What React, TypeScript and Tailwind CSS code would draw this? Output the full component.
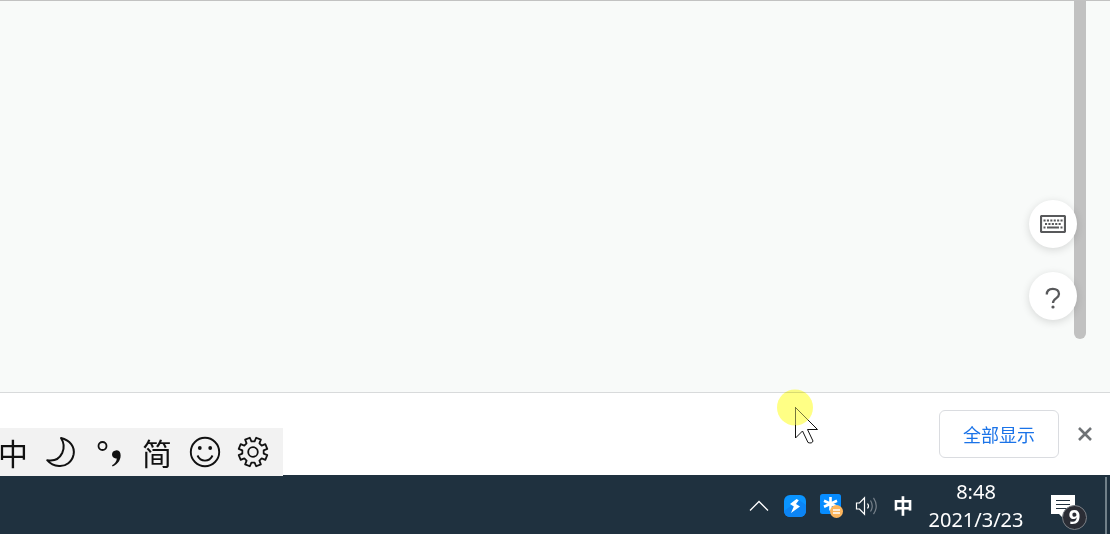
import React from "react";

const point = (radius: number, degrees: number) => {
  const a = ((degrees - 90) * Math.PI) / 180;
  return `${(15 + radius * Math.cos(a)).toFixed(2)} ${(15 + radius * Math.sin(a)).toFixed(2)}`;
};

const gearPath =
  "M" +
  Array.from({ length: 8 }, (_, i) => {
    const c = i * 45 + 22.5;
    return [point(10.8, c - 14), point(14.6, c - 10), point(14.6, c + 10), point(10.8, c + 14)].join("L");
  }).join("L") +
  "Z";

function MoonIcon() {
  return (
    <svg className="size-8" viewBox="0 0 32 32" fill="none" stroke="#111" strokeWidth="2" strokeLinejoin="round">
      <path d="M16 2C25 4 30 11 28.6 18.5C27 26 21 30.5 14 30C8.5 29.8 4.5 27 2.2 24.2C9 25.5 14.5 22.5 17.2 17C19.5 12 19 6.5 16 2Z" />
    </svg>
  );
}

function PunctuationIcon() {
  return (
    <svg className="size-8" viewBox="0 0 32 32" fill="none">
      <circle cx="9.500" cy="10" r="4" stroke="#111" strokeWidth="1.8" />
      <path d="M19 18.600a4.300 4.300 0 0 1 8.400-1.200c1.200 5.200-2.200 10.800-7.800 13l-.6-1.200c3-1.700 4.700-4.200 4.800-6.800c-2.600.5-4.800-1.200-4.800-3.800Z" fill="#111" />
    </svg>
  );
}

function SmileIcon() {
  return (
    <svg className="size-8" viewBox="0 0 32 32" fill="none" stroke="#111" strokeWidth="1.900">
      <circle cx="16" cy="16" r="14.200" />
      <path d="M8.500 19.500C11.500 26.300 20.500 26.300 23.500 19.500" />
      <circle cx="10.800" cy="12" r="1.900" fill="#111" stroke="none" />
      <circle cx="21.200" cy="12" r="1.900" fill="#111" stroke="none" />
    </svg>
  );
}

function GearIcon() {
  return (
    <svg className="size-8" viewBox="-1 -1 32 32" fill="none" stroke="#111" strokeWidth="1.800" strokeLinejoin="round">
      <path d={gearPath} />
      <circle cx="15" cy="15" r="4.800" />
    </svg>
  );
}

function KeyboardIcon() {
  return (
    <svg className="h-[18px] w-[26px]" viewBox="0 0 26 18" fill="none">
      <rect x="1" y="1" width="24" height="16" rx="1" stroke="#58595b" strokeWidth="2.200" />
      <path d="M3.500 5.500H23" stroke="#58595b" strokeWidth="2" strokeDasharray="2.100 1.300" />
      <path d="M5 9H21" stroke="#58595b" strokeWidth="2" strokeDasharray="2.100 1.300" />
      <path d="M3.500 12.500H5.500M7 12.500H19M20.500 12.500H22.500" stroke="#58595b" strokeWidth="2" />
    </svg>
  );
}

function QuestionIcon() {
  return (
    <svg className="h-[22px] w-4" viewBox="0 0 16 22" fill="none">
      <path d="M1.800 7.500C1.800 3.800 4.200 1.800 7.800 1.800C11.500 1.800 14 3.900 14 7C14 11.500 8 11.200 8 16" stroke="#58595b" strokeWidth="2.300" />
      <circle cx="8" cy="20" r="1.600" fill="#58595b" />
    </svg>
  );
}

function FlashIcon() {
  return (
    <svg className="size-[22px]" viewBox="0 0 22 22">
      <rect width="22" height="22" rx="6" fill="#0a94ff" />
      <path d="M0 16L15 5L22 10V16A6 6 0 0 1 16 22H6A6 6 0 0 1 0 16Z" fill="#0c84f4" />
      <path d="M12.500 4L6 9L9.800 11.500L7 18L16 11.500L12 9L14.800 5.200Z" fill="#fff" />
    </svg>
  );
}

function StarIcon() {
  return (
    <svg className="size-6" viewBox="0 0 24 24">
      <rect x="1" y="0" width="21" height="20" rx="2.500" fill="#078cff" />
      <path d="M11.500 3V16.500M5 6.700L18 12.800M18 6.700L5 12.800" stroke="#fff" strokeWidth="2.600" />
      <circle cx="17.500" cy="17.500" r="6.500" fill="#fcb55d" />
      <path d="M14 16H21M14 19H21" stroke="#fff" strokeWidth="1.300" />
    </svg>
  );
}

function SpeakerIcon() {
  return (
    <svg className="size-6" viewBox="0 0 24 24" fill="none">
      <path d="M1.500 9H4.500L9.500 3.800V20.200L4.500 15H1.500Z" stroke="#fff" strokeWidth="1.200" />
      <path d="M12.500 9.500Q14.500 12 12.500 14.500" stroke="#fff" strokeWidth="1.200" />
      <path d="M15.500 6.500Q19 12 15.500 17.500M18.500 3.800Q24 12 18.500 20.200" stroke="#77818a" strokeWidth="1.200" />
    </svg>
  );
}

function NoticeIcon() {
  return (
    <svg className="h-7 w-6" viewBox="0 0 24 28">
      <path d="M0 3H24V22H13V27L8 22H0Z" fill="#fff" />
      <path d="M5 8.500H19M5 12.500H19M5 16.500H19" stroke="#20303e" />
    </svg>
  );
}

function Pointer() {
  return (
    <svg className="pointer-events-none absolute left-[776px] top-[388px] h-14 w-[42px]" viewBox="0 0 42 56" aria-hidden="true">
      <path d="M19.500 19.500V50L26.500 43L32 54.500Q36 56 37 53L31.500 41.500H41.500Z" fill="#fff" stroke="#111" />
      <circle cx="19" cy="19.500" r="18" fill="#ffff66" fillOpacity=".8" className="mix-blend-multiply" />
      <path d="M19.500 19.500V37M19.500 19.500L32 32" stroke="#77773c" fill="none" />
    </svg>
  );
}

export default function App() {
  return (
    <div className="relative flex min-h-screen flex-col overflow-hidden bg-white font-['Noto_Sans','Noto_Sans_CJK_SC',sans-serif]">
      <main className="relative flex flex-1 flex-col border-t border-[#c2c2c2] bg-[#f8faf9]">
        <div className="absolute right-6 top-0 h-[338px] w-3 rounded-b-full bg-[#c1c1c1]" />
        <div className="absolute right-[33px] top-[199px] flex flex-col gap-6">
          <button aria-label="Keyboard" className="flex size-12 items-center justify-center rounded-full bg-white shadow-[0_2px_8px_rgba(0,0,0,0.14)]">
            <KeyboardIcon />
          </button>
          <button aria-label="Help" className="flex size-12 items-center justify-center rounded-full bg-white pt-1 shadow-[0_2px_8px_rgba(0,0,0,0.14)]">
            <QuestionIcon />
          </button>
        </div>
      </main>

      <section className="flex h-[83px] items-center justify-end gap-[17px] border-t border-[#d8dadb] pr-4">
        <button className="h-12 w-[120px] rounded-md border border-[#dadce0] font-['Noto_Sans_CJK_SC',sans-serif] text-lg text-[#1a73e8]">
          全部显示
        </button>
        <button aria-label="Close" className="flex size-[18px] items-center justify-center">
          <svg className="size-[18px]" viewBox="0 0 18 18" stroke="#6f7376" strokeWidth="2.600">
            <path d="M3 3L15 15M15 3L3 15" />
          </svg>
        </button>
      </section>

      <footer className="flex h-[59px] items-center justify-end bg-[#1f313f] pt-0.5 text-white">
        <div className="flex items-center gap-3">
          <button aria-label="Show hidden icons" className="flex size-6 items-center justify-center">
            <svg className="h-3 w-5" viewBox="0 0 20 12" fill="none" stroke="#fff" strokeWidth="1.300">
              <path d="M1 10.500L10 1.500L19 10.500" />
            </svg>
          </button>
          <button aria-label="Flash" className="flex size-6 items-center justify-center"><FlashIcon /></button>
          <button aria-label="Star" className="flex size-6 items-center justify-center"><StarIcon /></button>
          <button aria-label="Volume" className="flex size-6 items-center justify-center"><SpeakerIcon /></button>
          <button className="w-6 font-['Noto_Sans_CJK_SC',sans-serif] text-xl font-bold leading-6">中</button>
        </div>
        <button className="ml-[11px] w-[100px] font-['Noto_Sans',sans-serif] text-xl leading-7">
          <span className="block">8:48</span>
          <span className="block">2021/3/23</span>
        </button>
        <button aria-label="Notifications" className="relative ml-[25px] mr-[30px]">
          <NoticeIcon />
          <span className="absolute left-[11px] top-[13px] flex size-[25px] items-center justify-center rounded-full border border-[#7b8086] bg-[#2b2d35] text-xl font-bold leading-6">9</span>
        </button>
        <div className="mr-[3px] h-full w-0.5 bg-[#718089]" />
      </footer>

      <div className="absolute bottom-[58px] left-0 flex h-12 w-[283px] items-center gap-4 overflow-hidden bg-[#f2f2f2] font-['Noto_Sans_CJK_SC',sans-serif] text-[30px] leading-none text-[#111]">
        <button className="-ml-[3px] w-8">中</button>
        <button aria-label="Moon"><MoonIcon /></button>
        <button aria-label="Punctuation"><PunctuationIcon /></button>
        <button className="w-8">简</button>
        <button aria-label="Emoji"><SmileIcon /></button>
        <button aria-label="Settings"><GearIcon /></button>
      </div>
      <Pointer />
    </div>
  );
}
